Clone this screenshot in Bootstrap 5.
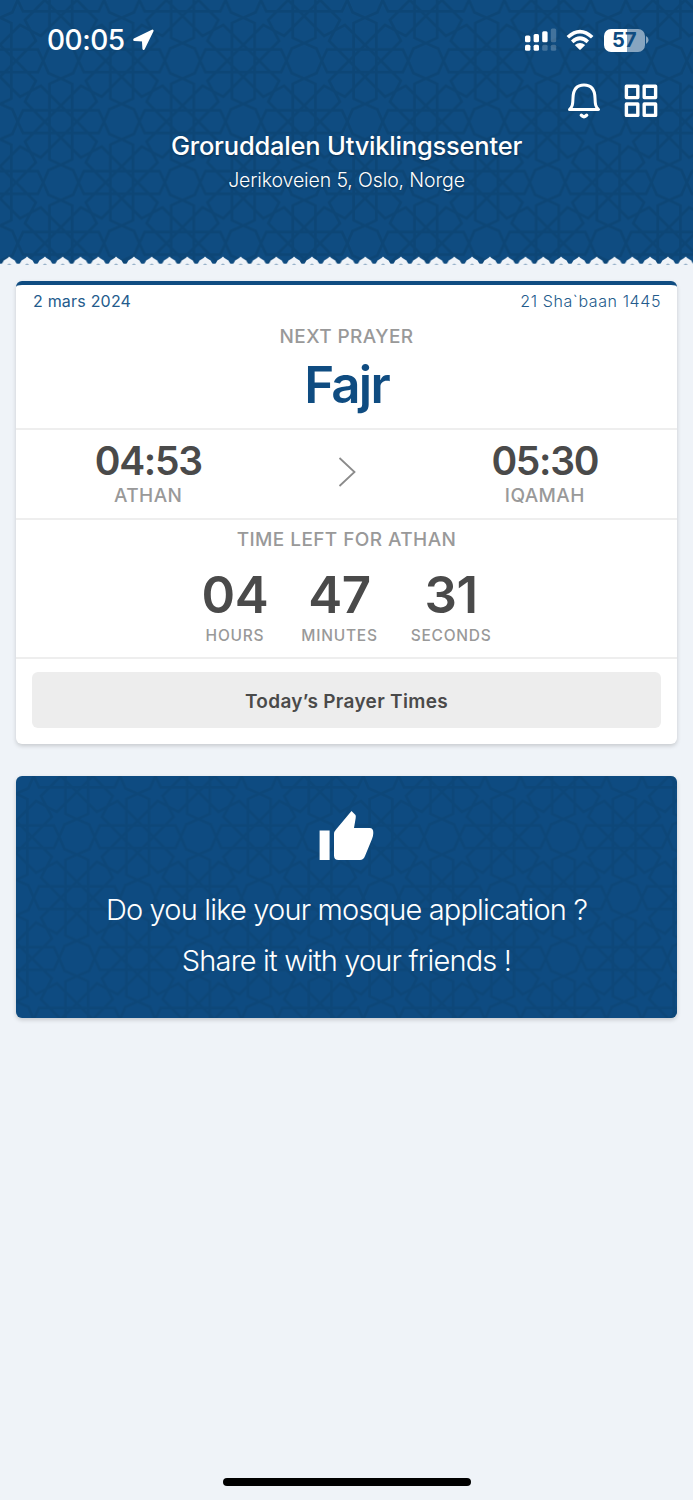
<!DOCTYPE html>
<html lang="en">
<head>
<meta charset="utf-8">
<meta name="viewport" content="width=device-width, initial-scale=1">
<title>Groruddalen Utviklingssenter</title>
<link rel="stylesheet" href="https://cdn.jsdelivr.net/npm/bootstrap@5.3.0/dist/css/bootstrap.min.css">
<style>
  :root { --brand: #0f4c81; }
  body { background: #eff3f8; font-family: Inter, "Liberation Sans", sans-serif; height: 1500px; overflow: hidden; }
  .hero { height: 265px; background: var(--brand); color: #fff; }
  .tiles { inset: 0; width: 100%; height: 100%; }
  .edge { left: 0; bottom: 0; width: 100%; height: 12px; }
  .statusbar { height: 80px; padding: 0 44px 0 47px; }
  .clock { font-size: 28px; font-weight: 500; line-height: 34px; letter-spacing: -.5px; }
  .wifi { margin: 0 10px 0 9px; }
  .battery { width: 41px; height: 23px; border-radius: 7px; font-size: 20px; line-height: 23px; font-weight: 700; color: var(--brand); background: linear-gradient(90deg, #fff 57%, #87a5c0 57%); letter-spacing: .3px; }
  .tools { height: 42px; padding-right: 35px; gap: 22px; }
  .mosque { font-size: 25.5px; font-weight: 500; line-height: 34px; letter-spacing: -.21px; text-shadow: 0 1px 2px rgba(0,0,0,.4); margin-top: 7px; }
  .address { font-size: 19.5px; font-weight: 300; line-height: 26px; letter-spacing: -.12px; margin-top: 4px; text-shadow: 0 1px 2px rgba(0,0,0,.4); }
  .panel { border-radius: 6px; box-shadow: 0 2px 4px rgba(0,0,0,.17); overflow: hidden; }
  .prayer { height: 463px; border-top: 4px solid var(--brand); background: #fff; }
  .rule { border-bottom: 2px solid #eee; }
  .dates { color: #235b8c; font-size: 16px; line-height: 20px; letter-spacing: .2px; padding: 6px 16px 0 17px; }
  .hijri { letter-spacing: .6px; }
  .caption { color: #999; font-size: 19px; font-weight: 500; line-height: 24px; letter-spacing: .42px; }
  .fajr { color: var(--brand); font-size: 51px; font-weight: 600; line-height: 60px; letter-spacing: -1.8px; }
  .side { width: 40%; }
  .hour { color: #4a4a4a; font-size: 39px; font-weight: 600; line-height: 46px; letter-spacing: -1.3px; }
  .count { color: #4a4a4a; font-size: 51px; font-weight: 600; line-height: 60px; letter-spacing: -.4px; }
  .unit { color: #999; font-size: 15.5px; font-weight: 500; line-height: 20px; letter-spacing: .75px; margin-top: 1px; }
  .today { height: 56px; border-radius: 6px; background: #ededed; color: #4a4a4a; font-size: 19px; font-weight: 600; letter-spacing: .32px; }
  .share { height: 242px; background: var(--brand); color: #fff; margin-top: 32px; font-size: 29px; font-weight: 300; line-height: 51px; letter-spacing: -.83px; }
  .homebar { width: 248px; height: 8px; border-radius: 4px; background: #000; left: 223px; top: 1478px; }
</style>
</head>
<body>
<svg width="0" height="0" class="position-absolute" aria-hidden="true">
  <defs>
    <g id="half"><path d="M53 0L37 37L0 53M53 0L69 34H182.5M0 53L34 69V182.5M134.5 0L75 60L91.25 91.25L60 75L0 134.5L48 182.5"/></g>
    <g id="quad"><use href="#half"/><use href="#half" transform="translate(182.5 182.5) rotate(180)"/></g>
    <pattern id="star" width="365" height="365" patternUnits="userSpaceOnUse" patternTransform="scale(.3333)">
      <g transform="translate(182.5 182.5)" fill="none" stroke="#0d4676" stroke-width="8.5">
        <use href="#quad"/><use href="#quad" transform="scale(-1 1)"/><use href="#quad" transform="scale(1 -1)"/><use href="#quad" transform="scale(-1 -1)"/>
      </g>
    </pattern>
    <pattern id="dome" width="17.8" height="12" patternUnits="userSpaceOnUse" patternTransform="translate(.4 0)">
      <path fill="#eff3f8" d="M0 12V10.8Q2 11 2.4 9.2Q2.8 7.4 5.4 6.2Q7.6 5.2 8.9 3.6Q10.2 5.2 12.4 6.2Q15 7.4 15.4 9.2Q15.8 11 17.8 10.8V12Z"/>
      <path fill="#3f709b" d="M6.8 11.6Q8.9 9.8 11 11.6Z"/>
    </pattern>
  </defs>
</svg>

<header class="hero position-relative">
  <svg class="tiles position-absolute"><rect width="100%" height="100%" fill="url(#star)"/></svg>
  <svg class="edge position-absolute"><rect width="100%" height="12" fill="url(#dome)"/></svg>
  <div class="position-relative">
    <div class="statusbar d-flex align-items-center justify-content-between">
      <div class="d-flex align-items-center">
        <span class="clock">00:05</span>
        <svg class="ms-2" width="22" height="22" viewBox="0 0 22 22"><path fill="#fff" stroke="#fff" stroke-width="2.4" stroke-linejoin="round" d="M19.4 1.800L10.600 19.800L10.100 11.200L1.400 10.700Z"/></svg>
      </div>
      <div class="d-flex align-items-center">
        <svg width="32" height="24" viewBox="0 0 32 24" fill="#fff"><rect x="0" y="7.500" width="5.400" height="6.800" rx="1.500"/><rect x="8.600" y="6" width="5.400" height="8.300" rx="1.500"/><rect x="17.200" y="3.200" width="5.400" height="11.100" rx="1.500"/><rect x="25.800" y=".4" width="5.400" height="13.900" rx="1.500" opacity=".22"/><rect x="0" y="16.800" width="5.400" height="6" rx="1.500"/><rect x="8.600" y="16.800" width="5.400" height="6" rx="1.500"/><rect x="17.200" y="16.800" width="5.400" height="6" rx="1.500" opacity=".22"/><rect x="25.800" y="16.800" width="5.400" height="6" rx="1.500" opacity=".22"/></svg>
        <svg class="wifi" width="28" height="24" viewBox="1 0 28 24" fill="none" stroke="#fff" stroke-width="3.600"><path d="M2.800 9.300Q15 -2.100 27.200 9.300M7.200 13.800Q15 6.700 22.800 13.800"/><path fill="#fff" stroke="none" d="M9.800 17.100Q15 12.900 20.200 17.100L15.700 21.500Q15 22.100 14.300 21.500Z"/></svg>
        <div class="battery text-center">57</div>
        <svg width="4" height="8" viewBox="0 0 4 8"><path fill="#87a5c0" d="M1 0Q3.600 1.500 3.600 4T1 8Z"/></svg>
      </div>
    </div>
    <div class="tools d-flex justify-content-end align-items-center">
      <svg width="36" height="38" viewBox="0 0 36 38" fill="none" stroke="#fff" stroke-width="3" stroke-linejoin="round" stroke-linecap="round"><path d="M3.500 27.500C6.500 24.500 6.800 22.500 7 16C7.200 7.500 10.500 3 18 3S28.800 7.500 29 16C29.200 22.500 29.500 24.500 32.500 27.500Z"/><path d="M15.300 33.200Q18 36.200 20.700 33.200" stroke-width="3.400"/></svg>
      <svg width="34" height="34" viewBox="0 0 34 34" fill="none" stroke="#fff" stroke-width="3.400" stroke-linejoin="round"><rect x="2.400" y="2.200" width="11.400" height="11.400"/><rect x="20.200" y="2.200" width="11.400" height="11.400"/><rect x="2.400" y="20" width="11.400" height="11.400"/><rect x="20.200" y="20" width="11.400" height="11.400"/></svg>
    </div>
    <h1 class="mosque text-center mb-0">Groruddalen Utviklingssenter</h1>
    <div class="address text-center">Jerikoveien 5, Oslo, Norge</div>
  </div>
</header>

<main class="px-3 pt-3">
  <section class="panel prayer">
    <div class="rule" style="height:145px">
      <div class="dates d-flex justify-content-between"><span>2 mars 2024</span><span class="hijri fw-light">21 Sha`baan 1445</span></div>
      <div class="caption text-center" style="margin-top:14px">NEXT PRAYER</div>
      <div class="fajr text-center" style="margin-top:6px">Fajr</div>
    </div>
    <div class="rule d-flex text-center align-items-center" style="height:90px">
      <div class="side" style="margin-top:-3px"><div class="hour">04:53</div><div class="caption">ATHAN</div></div>
      <div class="flex-fill"><svg class="d-block mx-auto" style="margin-top:-5px" width="20" height="32" viewBox="0 0 20 32" fill="none" stroke="#8b8b8b" stroke-width="1.800"><path d="M2.500 2L17.500 16L2.500 30"/></svg></div>
      <div class="side" style="margin-top:-3px"><div class="hour">05:30</div><div class="caption">IQAMAH</div></div>
    </div>
    <div class="rule text-center" style="height:139px">
      <div class="caption" style="padding-top:8px">TIME LEFT FOR ATHAN</div>
      <div class="d-flex justify-content-center" style="gap:33px;padding-top:13px">
        <div><div class="count">04</div><div class="unit">HOURS</div></div>
        <div><div class="count">47</div><div class="unit">MINUTES</div></div>
        <div><div class="count">31</div><div class="unit">SECONDS</div></div>
      </div>
    </div>
    <div style="padding:13px 16px"><button class="today btn w-100 border-0 p-0 pt-1">Today’s Prayer Times</button></div>
  </section>

  <section class="panel share position-relative text-center">
    <svg class="tiles position-absolute start-0" opacity=".65"><rect width="100%" height="100%" fill="url(#star)"/></svg>
    <div class="position-relative">
      <svg class="d-block mx-auto" style="margin-bottom:22px" width="56" height="86" viewBox="0 0 56 86" fill="#fff"><path d="M.6 54.500H10.600V84H.6ZM15 58Q15 55.500 17 53.500L32.500 35L36.500 39Q37 40 36.700 42L35 52H50.500Q54.500 52 54.300 57Q54.300 60 53 63L46 80Q44.500 84 41 84H19.500Q15 84 15 79.500Z"/></svg>
      <div>Do you like your mosque application ?</div>
      <div>Share it with your friends !</div>
    </div>
  </section>
</main>
<div class="homebar position-absolute"></div>
<script src="https://cdn.jsdelivr.net/npm/bootstrap@5.3.0/dist/js/bootstrap.bundle.min.js"></script>
</body>
</html>
